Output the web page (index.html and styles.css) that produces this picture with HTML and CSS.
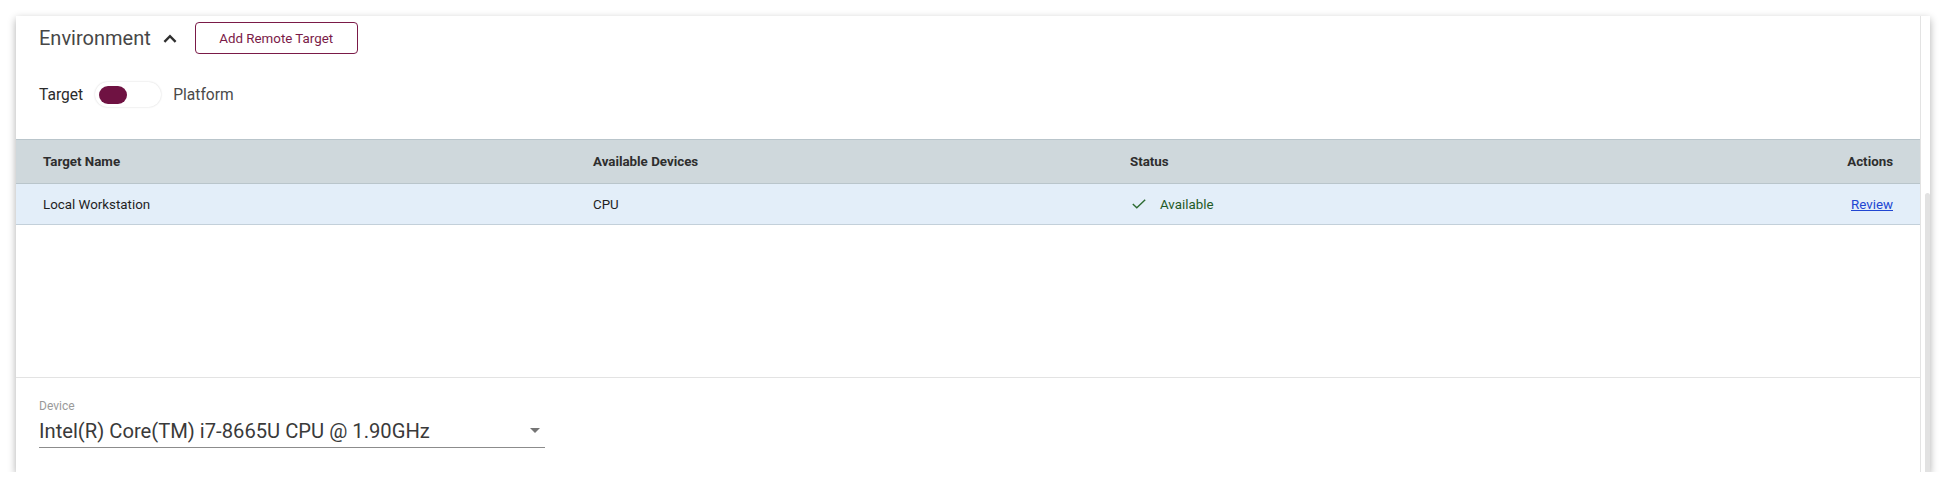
FILE: index.html
```html
<!DOCTYPE html>
<html lang="en">
<head>
<meta charset="utf-8">
<title>Environment</title>
<link rel="stylesheet" href="styles.css">
</head>
<body>
<div class="card">
  <div class="main">
    <div class="env-head">
      <h2 class="env-title">Environment</h2>
      <svg class="chev" width="24" height="24" viewBox="0 0 24 24"><polyline points="6.4,14.8 12,9.2 17.6,14.8" fill="none" stroke="#2f2f2f" stroke-width="2.4"/></svg>
      <button class="btn-outline">Add Remote Target</button>
    </div>
    <div class="toggle-row">
      <span class="tgl-label tgl-on">Target</span>
      <span class="switch"><span class="knob"></span></span>
      <span class="tgl-label tgl-off">Platform</span>
    </div>
    <div class="table">
      <div class="tr th">
        <div class="cell">Target Name</div>
        <div class="cell">Available Devices</div>
        <div class="cell">Status</div>
        <div class="cell right">Actions</div>
      </div>
      <div class="tr td">
        <div class="cell">Local Workstation</div>
        <div class="cell">CPU</div>
        <div class="cell status"><svg width="14" height="10" viewBox="0 0 14 10"><polyline points="0.8,5 4.8,8.8 13.2,0.8" fill="none" stroke="#2e6b32" stroke-width="1.4"/></svg><span>Available</span></div>
        <div class="cell right"><a class="link" href="#">Review</a></div>
      </div>
    </div>
    <div class="device">
      <div class="dev-label">Device</div>
      <div class="select">
        <span class="sel-value">Intel(R) Core(TM) i7-8665U CPU @ 1.90GHz</span>
        <svg class="sel-arrow" width="24" height="24" viewBox="0 0 24 24"><path d="M7 10l5 5 5-5z" fill="#757575"/></svg>
      </div>
    </div>
  </div>
  <div class="scrollbar"><div class="thumb"></div></div>
</div>
</body>
</html>
```
FILE: styles.css
```css
* { box-sizing: border-box; }
html, body { margin: 0; padding: 0; background: #ffffff; }
body {
  font-family: Roboto, "Liberation Sans", Arial, sans-serif;
  padding: 16px 24px 0 16px;
}
.card {
  height: 456px;
  background: #fff;
  display: flex;
  box-shadow: 0 3px 8px rgba(0,0,0,0.32);
}
.main { flex: 1; display: flex; flex-direction: column; }
.scrollbar {
  width: 10px;
  border-left: 1px solid #e3e3e3;
  display: flex;
  flex-direction: column;
  align-items: flex-end;
}
.thumb {
  margin-top: 177px;
  flex: 1;
  width: 5px;
  background: #e2e2e2;
  border-radius: 3px 3px 0 0;
}
.env-head {
  display: flex;
  align-items: center;
  height: 32px;
  margin-top: 6px;
  padding: 0 23px;
}
.env-title {
  margin: 0;
  font-size: 20px;
  font-weight: 400;
  color: #474747;
  line-height: 24px;
}
.chev { margin-left: 7px; margin-top: 2px; }
.btn-outline {
  margin-left: 13px;
  width: 163px;
  height: 32px;
  border: 1px solid #7a1a47;
  border-radius: 4px;
  background: #fff;
  color: #7a1a47;
  font-family: inherit;
  font-size: 13.33px;
  font-weight: 400;
  padding: 0;
}
.toggle-row {
  display: flex;
  align-items: center;
  height: 25px;
  margin-top: 28px;
  padding: 0 23px;
}
.tgl-label { font-size: 15.6px; line-height: 20px; }
.tgl-on { color: #2b2b2b; }
.tgl-off { color: #4a4a4a; }
.switch {
  margin: 0 12px 0 12px;
  width: 66px;
  height: 25px;
  border-radius: 13px;
  background: #fff;
  box-shadow: 0 0 2px rgba(0,0,0,0.18);
  display: flex;
  align-items: center;
  padding-left: 4px;
}
.knob {
  width: 28px;
  height: 18px;
  border-radius: 9px;
  background: #6f1242;
}
.table {
  margin-top: 32px;
  height: 239px;
  border-bottom: 1px solid #e3e3e3;
}
.tr {
  display: grid;
  grid-template-columns: 550px 537px 1fr auto;
  align-items: center;
  padding: 0 27px;
  font-size: 13.33px;
}
.th {
  height: 45px;
  background: #cfd8dc;
  border-top: 1px solid #b9c5cb;
  border-bottom: 1px solid #b9c5cb;
  font-weight: 700;
  color: #2e2e2e;
}
.td {
  height: 41px;
  background: #e3eef9;
  border-bottom: 1px solid #c3d0da;
  font-weight: 400;
  color: #1f1f1f;
}
.cell.right { text-align: right; }
.status { display: flex; align-items: center; color: #1f5a27; }
.status svg { margin-left: 2px; margin-right: 14px; }
.link { color: #2146d2; text-decoration: underline; }
.device { padding: 21px 23px 0; }
.dev-label { font-size: 12px; line-height: 14px; color: #9a9a9a; }
.select {
  margin-top: 4px;
  width: 506px;
  display: flex;
  align-items: center;
  justify-content: space-between;
  border-bottom: 1px solid #8c8c8c;
  height: 31px;
  padding-bottom: 3px;
}
.sel-value { font-size: 20.2px; line-height: 24px; color: #3a3a3a; }
.sel-arrow { margin-right: -2px; margin-top: -2px; }
```
